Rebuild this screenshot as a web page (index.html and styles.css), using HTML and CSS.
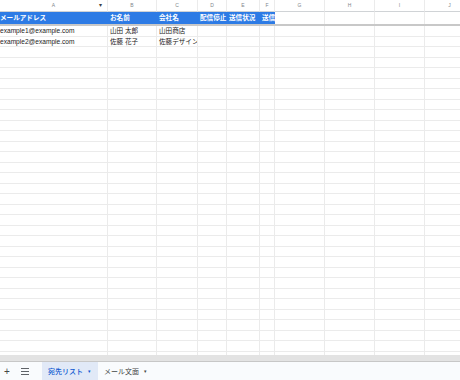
FILE: index.html
```html
<!DOCTYPE html>
<html lang="ja">
<head>
    <meta charset="UTF-8">
    <meta name="viewport" content="width=device-width, initial-scale=1.0">
    <title>宛先リスト</title>
    <link rel="stylesheet" href="styles.css">
</head>
<body>
    <div class="sheet">
        <div class="row col-heads">
            <div class="cell first">A<span class="filter">▾</span></div>
            <div class="cell">B</div>
            <div class="cell">C</div>
            <div class="cell">D</div>
            <div class="cell">E</div>
            <div class="cell">F</div>
            <div class="cell">G</div>
            <div class="cell">H</div>
            <div class="cell">I</div>
            <div class="cell">J</div>
        </div>

        <!-- 固定行（ヘッダー） -->
        <div class="row head-row">
            <div class="cell first">メールアドレス</div>
            <div class="cell">お名前</div>
            <div class="cell">会社名</div>
            <div class="cell">配信停止</div>
            <div class="cell">送信状況</div>
            <div class="cell">送信</div>
            <div class="cell blank"></div>
            <div class="cell blank"></div>
            <div class="cell blank"></div>
            <div class="cell blank"></div>
        </div>

        <div class="body" id="rows">
            <div class="row">
                <div class="cell first">example1@example.com</div>
                <div class="cell">山田 太郎</div>
                <div class="cell">山田商店</div>
                <div class="cell"></div>
                <div class="cell"></div>
                <div class="cell"></div>
                <div class="cell"></div>
                <div class="cell"></div>
                <div class="cell"></div>
                <div class="cell"></div>
            </div>
            <div class="row">
                <div class="cell first">example2@example.com</div>
                <div class="cell">佐藤 花子</div>
                <div class="cell">佐藤デザイン</div>
                <div class="cell"></div>
                <div class="cell"></div>
                <div class="cell"></div>
                <div class="cell"></div>
                <div class="cell"></div>
                <div class="cell"></div>
                <div class="cell"></div>
            </div>
        </div>
    </div>

    <div class="scrollbar"></div>

    <div class="tabs">
        <span class="tab-btn plus">+</span>
        <span class="tab-btn">
            <svg width="8" height="7" viewBox="0 0 8 7">
                <path d="M0 0.5H8M0 3.5H8M0 6.5H8" stroke="#5f6368" stroke-width="1"/>
            </svg>
        </span>
        <div class="tab active">宛先リスト <span class="caret">▾</span></div>
        <div class="tab">メール文面 <span class="caret">▾</span></div>
    </div>

    <script>
        // 空の行を追加
        const rows = document.getElementById('rows');
        for (let i = 0; i < 30; i++) {
            const row = document.createElement('div');
            row.className = 'row';
            for (let c = 0; c < 10; c++) {
                const cell = document.createElement('div');
                cell.className = c === 0 ? 'cell first' : 'cell';
                row.appendChild(cell);
            }
            rows.appendChild(row);
        }
    </script>
</body>
</html>
```

FILE: styles.css
```css
* {
    margin: 0;
    padding: 0;
    box-sizing: border-box;
}

body {
    font-family: 'Liberation Sans', Arial, 'Noto Sans CJK JP', sans-serif;
    background: #fff;
    color: #222;
    width: 460px;
    height: 380px;
    overflow: hidden;
}

.sheet {
    height: 355px;
    overflow: hidden;
}

.row {
    display: grid;
    grid-template-columns: 108px 49px 41px 29px 33px 15px 50px 50px 50px 50px;
    height: 10.5px;
    width: 475px;
}

.cell {
    border-right: 1px solid #ebebeb;
    border-bottom: 1px solid #ebebeb;
    font-size: 6.6px;
    line-height: 9.5px;
    padding-left: 2px;
    white-space: nowrap;
    overflow: hidden;
}

.cell.first {
    padding-left: 0;
}

.col-heads {
    height: 12px;
}

.col-heads .cell {
    position: relative;
    font-size: 5px;
    line-height: 11px;
    color: #80868b;
    text-align: center;
    padding: 0;
    border-bottom-color: #d0d3d6;
}

.filter {
    position: absolute;
    right: 5px;
    top: 0;
    font-size: 6px;
    color: #3c4043;
}

.head-row {
    height: 14px;
    border-bottom: 2px solid #c8c8c8;
}

.head-row .cell {
    background: #2d7be5;
    color: #fff;
    font-weight: bold;
    line-height: 12px;
    border-right: none;
    border-bottom: none;
}

.head-row .cell.blank {
    background: #fff;
    border-right: 1px solid #ebebeb;
}

.body .cell {
    line-height: 10px;
}

.scrollbar {
    height: 7px;
    background: #e3e3e3;
    border-bottom: 1px solid #c7c7c7;
}

.tabs {
    height: 18px;
    background: #f9fbfd;
    display: flex;
    align-items: stretch;
    font-size: 7px;
    color: #444746;
}

.tab-btn {
    display: flex;
    align-items: center;
    justify-content: center;
    width: 14px;
}

.tab-btn.plus {
    font-size: 10px;
    color: #444746;
    margin-left: 0;
}

.tab-btn + .tab-btn {
    margin-left: 4px;
}

.tab {
    display: flex;
    align-items: center;
    padding: 0 6px;
    gap: 5px;
}

.tab.active {
    margin-left: 10px;
    background: #e1e9f7;
    color: #0b57d0;
    font-weight: 500;
    width: 56px;
}

.caret {
    font-size: 5px;
}
```
